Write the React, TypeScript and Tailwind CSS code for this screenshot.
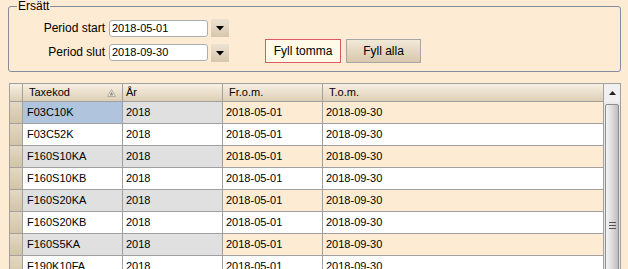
import React from "react";

const rows = [
  "F03C10K",
  "F03C52K",
  "F160S10KA",
  "F160S10KB",
  "F160S20KA",
  "F160S20KB",
  "F160S5KA",
  "F190K10FA",
];

function DropButton() {
  return (
    <div className="w-[18px] h-[18px] flex items-center justify-center bg-gradient-to-b from-[#ede3d3] to-[#d6c7ad]">
      <svg width="8" height="5" viewBox="0 0 8 5">
        <path d="M0 0h8L4 4.5z" fill="#000" />
      </svg>
    </div>
  );
}

function SortGlyph() {
  return (
    <svg width="9" height="8" viewBox="0 0 9 8" className="ml-auto mr-[6px]">
      <path d="M4.5 0.5L8.5 7.5H0.5z" fill="#f4f1ec" stroke="#b3aca0" strokeWidth="1" />
      <path d="M4.5 2.5L6.5 6.5H2.5z" fill="#9a948a" />
    </svg>
  );
}

export default function App() {
  return (
    <div
      className="w-[628px] h-[269px] overflow-hidden bg-[#fdebd3] text-[11px] text-black"
      style={{ fontFamily: '"Liberation Sans", Arial, sans-serif' }}
    >
      {/* Ersätt groupbox */}
      <div className="relative ml-[8px] mt-[6px] w-[613px] h-[66px] border border-[#848c9c] rounded-[3px]">
        <span className="absolute -top-[8px] left-[8px] px-[1px] bg-[#fdebd3] leading-[14px] text-[12px]">Ersätt</span>

        <div className="flex items-center mt-[12px]">
          <span className="w-[96px] text-right text-[12px] leading-[17px]">Period start</span>
          <div className="ml-[4px] w-[99px] h-[17px] bg-white border border-[#abadb3] rounded-[3px] flex items-center pl-[2px] leading-none">
            2018-05-01
          </div>
          <div className="ml-[3px]">
            <DropButton />
          </div>
        </div>

        <div className="flex items-start mt-[7px]">
          <span className="w-[96px] text-right text-[12px] leading-[17px]">Period slut</span>
          <div className="ml-[4px] w-[99px] h-[17px] bg-white border border-[#abadb3] rounded-[3px] flex items-center pl-[2px] leading-none">
            2018-09-30
          </div>
          <div className="ml-[3px]">
            <DropButton />
          </div>
          <button className="ml-[36px] -mt-[5px] w-[76px] h-[24px] bg-[#fffbe8] border border-[#dc5a64] text-[12px]">
            Fyll tomma
          </button>
          <button className="ml-[5px] -mt-[5px] w-[75px] h-[24px] bg-gradient-to-b from-[#f2e9da] to-[#d8c7ab] border border-[#a5a5a5] text-[12px]">
            Fyll alla
          </button>
        </div>
      </div>

      {/* Grid */}
      <div className="ml-[9px] mt-[11px] w-[612px] border-l border-t border-r border-[#a0a0a0] flex">
        <div className="w-[594px]">
          <div className="flex h-[18px] bg-gradient-to-b from-[#f7f0e3] to-[#dccdb2]">
            <div className="w-[13px] border-r border-b border-[#a0a0a0]" />
            <div className="w-[100px] flex items-center pl-[6px] border-r border-b border-[#a0a0a0]">
              Taxekod
              <SortGlyph />
            </div>
            <div className="w-[100px] flex items-center pl-[3px] border-r border-b border-[#a0a0a0]">År</div>
            <div className="w-[100px] flex items-center pl-[6px] border-r border-b border-[#a0a0a0]">Fr.o.m.</div>
            <div className="w-[281px] flex items-center pl-[6px] border-r border-b border-[#a0a0a0]">T.o.m.</div>
          </div>
          {rows.map((code, i) => {
            const odd = i % 2 === 0;
            return (
              <div key={code} className="flex h-[22px]">
                <div className="w-[13px] border-r border-b border-[#a0a0a0] bg-gradient-to-b from-[#e3d8c5] to-[#d3c4a8]" />
                <div
                  className={
                    "w-[100px] flex items-center pl-[4px] border-r border-b border-[#a0a0a0] " +
                    (i === 0 ? "bg-[#b0c4de]" : odd ? "bg-[#e0e0e0]" : "bg-white")
                  }
                >
                  {code}
                </div>
                <div
                  className={
                    "w-[100px] flex items-center pl-[3px] border-r border-b border-[#a0a0a0] " +
                    (odd ? "bg-[#e0e0e0]" : "bg-white")
                  }
                >
                  2018
                </div>
                <div
                  className={
                    "w-[100px] flex items-center pl-[3px] border-r border-b border-[#a0a0a0] " +
                    (odd ? "bg-[#fdebd3]" : "bg-white")
                  }
                >
                  2018-05-01
                </div>
                <div
                  className={
                    "w-[281px] flex items-center pl-[3px] border-r border-b border-[#a0a0a0] " +
                    (odd ? "bg-[#fdebd3]" : "bg-white")
                  }
                >
                  2018-09-30
                </div>
              </div>
            );
          })}
        </div>

        {/* scrollbar */}
        <div className="w-[16px] bg-[#eaeaea] flex flex-col">
          <div className="h-[18px] flex items-center justify-center bg-[#f0f0f0]">
            <svg width="7" height="4" viewBox="0 0 7 4">
              <path d="M3.5 0L7 4H0z" fill="#222" />
            </svg>
          </div>
          <div className="mt-[2px] mx-[1px] h-[200px] rounded-t-[2px] border border-[#8d8d8d] bg-gradient-to-r from-[#f4f4f4] via-[#dcdcdc] to-[#bdbdbd] flex flex-col items-center">
            <div className="mt-[117px] flex flex-col gap-[2px]">
              <div className="w-[7px] h-px bg-[#555]" />
              <div className="w-[7px] h-px bg-[#555]" />
              <div className="w-[7px] h-px bg-[#555]" />
            </div>
          </div>
        </div>
      </div>
    </div>
  );
}
